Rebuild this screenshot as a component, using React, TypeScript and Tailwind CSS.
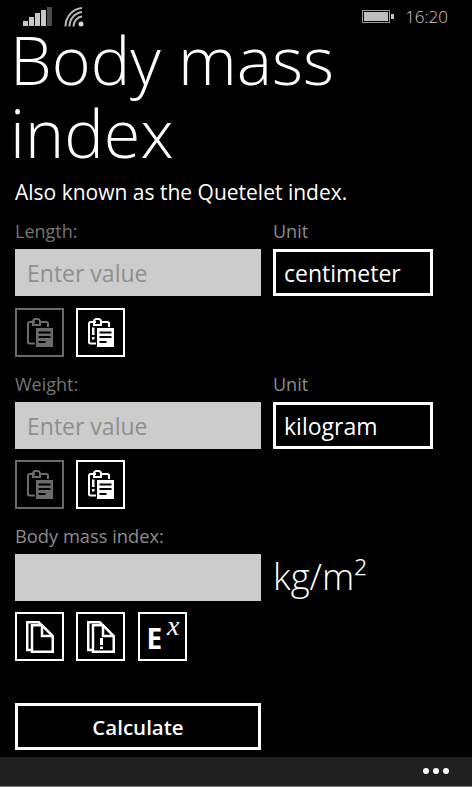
import type { ReactNode } from "react";

const font = "font-['Open_Sans',sans-serif]";

function IconButton({ dim, children }: { dim?: boolean; children: ReactNode }) {
  return (
    <div
      className={`flex h-[49px] w-[49px] items-center justify-center border-2 ${
        dim ? "border-[#6b6b6b] text-[#6b6b6b]" : "border-white text-white"
      }`}
    >
      {children}
    </div>
  );
}

function Clipboard({ alert }: { alert?: boolean }) {
  return (
    <svg width="26" height="29" viewBox="0 0 26 29" fill="none">
      <path d="M8 4H2.500a1.500 1.500 0 0 0-1.500 1.500V24a1.500 1.500 0 0 0 1.500 1.500H8" stroke="currentColor" strokeWidth="2" />
      <path d="M6 7V3.500A2.500 2.500 0 0 1 8.500 1h2A2.500 2.500 0 0 1 13 3.500V7z" stroke="currentColor" strokeWidth="2" />
      <path d="M12 4h7.500a1.500 1.500 0 0 1 1.500 1.500V9" stroke="currentColor" strokeWidth="2" />
      <path
        fillRule="evenodd"
        fill="currentColor"
        d="M9 10h17v19H9z M11.500 13.500v2h12v-2z M11.500 18v2h12v-2z M11.500 23v2h7v-2z"
      />
      {alert && <path d="M4 9.500h2.500V17H4z M4 19h2.500v2.500H4z" fill="currentColor" />}
    </svg>
  );
}

function Pages({ alert }: { alert?: boolean }) {
  return (
    <svg width="28" height="32" viewBox="0 0 28 32" fill="none" stroke="currentColor" strokeWidth="2.500">
      <path d="M5 29H1.250V1.250h11.500l3 3" />
      <path d="M6 4.250h10l10.750 10.750v15.750H6z" />
      <path d="M16 4.250V15h10.750" />
      {alert && <path d="M14.500 17v7 M14.500 25.500v2.500" strokeWidth="3" />}
    </svg>
  );
}

function ExpIcon() {
  return (
    <div className="relative h-[34px] w-[32px]">
      <span className="absolute bottom-[-1px] left-[0px] text-[28px] leading-[34px] font-bold">E</span>
      <span className="absolute top-[-6px] right-[-1px] font-['Liberation_Serif',serif] text-[28px] leading-[24px] italic">x</span>
    </div>
  );
}

function Field({ label, unit }: { label: string; unit: string }) {
  return (
    <div className="flex gap-[12px]">
      <div className="w-[246px]">
        <div className="h-[32px] text-[18px] leading-[28px] text-[#757575]">{label}</div>
        <div className="flex h-[47px] items-center bg-[#cccccc] px-[12px] pt-[1px] text-[23px] text-[#8f8f8f]">Enter value</div>
      </div>
      <div className="w-[160px]">
        <div className="h-[32px] text-[18px] leading-[28px] text-[#8c8c8c]">Unit</div>
        <div className="flex h-[47px] items-center border-[3px] border-white pt-[1px] pl-[8px] text-[23px] text-white">{unit}</div>
      </div>
    </div>
  );
}

export default function App() {
  return (
    <div className={`flex h-[787px] w-[472px] flex-col overflow-hidden bg-black text-white ${font}`}>
      <div className="flex h-[32px] shrink-0 items-center pt-[1px] pr-[24px] pl-[23px]">
        <div className="flex items-end gap-[1px]">
          <span className="h-[5px] w-[5px] bg-[#c8c8c8]" />
          <span className="h-[9px] w-[5px] bg-[#c8c8c8]" />
          <span className="h-[13px] w-[5px] bg-[#c8c8c8]" />
          <span className="h-[16px] w-[5px] bg-[#c8c8c8]" />
          <span className="h-[19px] w-[5px] bg-[#4a4a4a]" />
        </div>
        <svg className="ml-[12px]" width="20" height="20" viewBox="0 0 20 20" fill="none" stroke="#b8b8b8" strokeWidth="2">
          <path d="M1.500 19.500C1.500 10 8 2 18 1" />
          <path d="M5.500 19.500C5.500 12 10.500 6 18 5" />
          <path d="M9.500 19.500C9.500 14.500 13 10 18 9.500" />
          <circle cx="17" cy="17" r="2.500" fill="#d8d8d8" stroke="none" />
        </svg>
        <div className="ml-auto flex items-center gap-[11px]">
          <div className="flex items-center">
            <div className="h-[13px] w-[28px] border border-[#9a9a9a] p-[1px]">
              <div className="h-full w-full bg-[#bdbdbd]" />
            </div>
            <div className="ml-[1px] h-[5px] w-[3px] bg-[#bdbdbd]" />
          </div>
          <span className="text-[17px] font-light text-[#cfcfcf]">16:20</span>
        </div>
      </div>
      <div className="px-[15px]">
        <h1 className="mt-[-9px] ml-[-5px] text-[66.500px] leading-[73px] font-light">
          Body mass
          <br />
          index
        </h1>
        <p className="mt-[9px] h-[39px] text-[21px] leading-[28px]">Also known as the Quetelet index.</p>
        <Field label="Length:" unit="centimeter" />
        <div className="mt-[12px] flex gap-[12px]">
          <IconButton dim>
            <Clipboard />
          </IconButton>
          <IconButton>
            <Clipboard alert />
          </IconButton>
        </div>
        <div className="mt-[13px]">
          <Field label="Weight:" unit="kilogram" />
        </div>
        <div className="mt-[11px] flex gap-[12px]">
          <IconButton dim>
            <Clipboard />
          </IconButton>
          <IconButton>
            <Clipboard alert />
          </IconButton>
        </div>
        <div className="mt-[13px] flex items-end gap-[12px]">
          <div className="w-[246px]">
            <div className="h-[32px] text-[18.300px] leading-[28px] text-[#8c8c8c]">Body mass index:</div>
            <div className="h-[47px] bg-[#cccccc]" />
          </div>
          <div className="h-[47px] text-[36.500px] leading-[44px] font-light">kg/m²</div>
        </div>
        <div className="mt-[11px] flex gap-[12px]">
          <IconButton>
            <Pages />
          </IconButton>
          <IconButton>
            <Pages alert />
          </IconButton>
          <div className="ml-[1px]">
            <IconButton>
              <ExpIcon />
            </IconButton>
          </div>
        </div>
        <div className="mt-[42px] flex h-[47px] w-[246px] items-center justify-center border-[3px] border-white pt-[1px] text-[20.500px] font-semibold">
          Calculate
        </div>
      </div>
      <div className="mt-auto flex h-[30px] items-center justify-end gap-[4px] border-b border-[#777777] bg-[#212121] pr-[23px] pb-[1px]">
        <span className="h-[6px] w-[6px] rounded-full bg-white" />
        <span className="h-[6px] w-[6px] rounded-full bg-white" />
        <span className="h-[6px] w-[6px] rounded-full bg-white" />
      </div>
    </div>
  );
}
